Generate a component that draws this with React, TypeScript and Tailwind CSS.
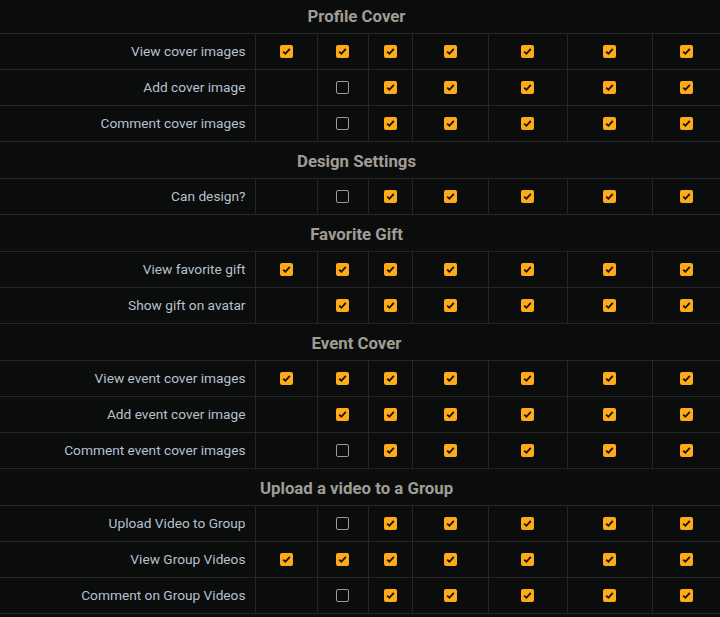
import React from 'react';

type Cell = 'c' | 'u' | '-';

interface Row {
  label: string;
  cells: string;
}

interface Section {
  title: string;
  rows: Row[];
}

const sections: Section[] = [
  {
    title: 'Profile Cover',
    rows: [
      { label: 'View cover images', cells: 'ccccccc' },
      { label: 'Add cover image', cells: '-uccccc' },
      { label: 'Comment cover images', cells: '-uccccc' },
    ],
  },
  {
    title: 'Design Settings',
    rows: [{ label: 'Can design?', cells: '-uccccc' }],
  },
  {
    title: 'Favorite Gift',
    rows: [
      { label: 'View favorite gift', cells: 'ccccccc' },
      { label: 'Show gift on avatar', cells: '-cccccc' },
    ],
  },
  {
    title: 'Event Cover',
    rows: [
      { label: 'View event cover images', cells: 'ccccccc' },
      { label: 'Add event cover image', cells: '-cccccc' },
      { label: 'Comment event cover images', cells: '-uccccc' },
    ],
  },
  {
    title: 'Upload a video to a Group',
    rows: [
      { label: 'Upload Video to Group', cells: '-uccccc' },
      { label: 'View Group Videos', cells: 'ccccccc' },
      { label: 'Comment on Group Videos', cells: '-uccccc' },
    ],
  },
];

const colWidths = ['w-[255px]', 'w-[62px]', 'w-[51px]', 'w-[44px]', 'w-[76px]', 'w-[79px]', 'w-[85px]', 'w-[68px]'];

const Box: React.FC<{ state: Cell }> = ({ state }) => {
  if (state === '-') return null;
  if (state === 'u') {
    return <span className="inline-block w-[13px] h-[13px] rounded-[2px] border border-[#9b9b9b] align-middle" />;
  }
  return (
    <span className="inline-flex items-center justify-center w-[13px] h-[13px] rounded-[2px] bg-[#ffab19] align-middle">
      <svg width="11" height="11" viewBox="0 0 11 11">
        <path d="M2.2 5.6 L4.4 7.8 L8.8 2.8" fill="none" stroke="#141414" strokeWidth="1.8" />
      </svg>
    </span>
  );
};

export default function App() {
  return (
    <div className="w-[720px] h-[617px] overflow-hidden bg-[#0b0c0c]" style={{ fontFamily: 'Roboto, "Noto Sans", sans-serif' }}>
      <table className="w-[720px] -mt-[4px] border-collapse table-fixed">
        <colgroup>
          {colWidths.map((w, i) => (
            <col key={i} className={w} />
          ))}
        </colgroup>
        <tbody>
          {sections.map((s) => (
            <React.Fragment key={s.title}>
              <tr className="h-[37px] border-y border-[#262626]">
                <td colSpan={8} className="text-center text-[16.8px] font-bold text-[#a09d95] p-0 pt-[3px] pr-[7px]">
                  {s.title}
                </td>
              </tr>
              {s.rows.map((r) => (
                <tr key={r.label} className="h-[36px] border-y border-[#262626]">
                  <td className="text-right pr-[9px] text-[13.7px] text-[#b6c2ce] p-0 border-r border-[#262626]">
                    {r.label}
                  </td>
                  {r.cells.split('').map((c, i) => (
                    <td key={i} className="text-center p-0 pb-[2px] border-x border-[#262626] leading-none">
                      <Box state={c as Cell} />
                    </td>
                  ))}
                </tr>
              ))}
            </React.Fragment>
          ))}
        </tbody>
      </table>
    </div>
  );
}
